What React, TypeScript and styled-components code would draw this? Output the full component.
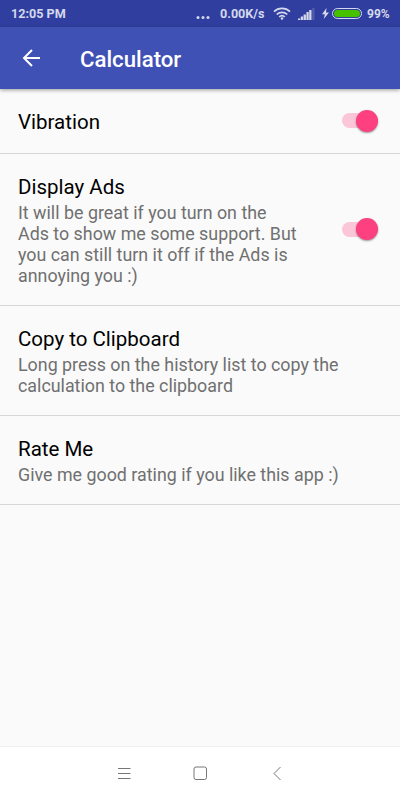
import { useState } from "react";
import styled, { createGlobalStyle } from "styled-components";

const GlobalStyle = createGlobalStyle`
  * {
    box-sizing: border-box;
  }
  body {
    margin: 0;
    font-family: Roboto, "Liberation Sans", sans-serif;
  }
`;

const Wrapper = styled.div`
  height: 100vh;
  display: flex;
  flex-direction: column;
  background: #fafafa;
  overflow: hidden;
`;

const StatusBar = styled.div`
  height: 27px;
  flex-shrink: 0;
  padding: 0 11px;
  display: flex;
  align-items: center;
  background: #303f9f;
  color: #d5d8ec;
  font-size: 12.6px;
  font-weight: 700;
  white-space: nowrap;
`;

const Clock = styled.span`
  flex: 1;
`;

const Dots = styled.svg`
  margin-right: 10px;
`;

const Speed = styled.span`
  width: 46px;
  margin-right: 7px;
`;

const WifiIcon = styled.svg`
  margin-right: 7px;
`;

const SignalIcon = styled.svg`
  margin-right: 7px;
`;

const BoltIcon = styled.svg`
  margin-right: 3px;
`;

const Battery = styled.div`
  width: 30px;
  height: 11px;
  margin-right: 5px;
  padding: 1px;
  border: 1px solid #d5d8ec;
  border-radius: 6px;
`;

const Charge = styled.div`
  width: 100%;
  height: 100%;
  border-radius: 4px;
  background: #45c100;
`;

const Percent = styled.span`
  width: 22px;
  font-size: 12px;
`;

const Toolbar = styled.header`
  height: 62px;
  flex-shrink: 0;
  padding: 0 20px;
  display: flex;
  align-items: center;
  background: #3f51b5;
  color: #fff;
  box-shadow: 0 1px 4px rgba(0, 0, 0, 0.4);
  z-index: 1;
`;

const BackButton = styled.button`
  width: 22px;
  height: 24px;
  margin-right: 38px;
  padding: 0;
  border: 0;
  background: none;
  color: inherit;
  svg {
    display: block;
  }
`;

const Heading = styled.h1`
  margin: 2px 0 0;
  font-size: 22.2px;
  font-weight: 500;
`;

const List = styled.main`
  flex: 1;
`;

const Row = styled.div<{ $compact?: boolean }>`
  display: flex;
  align-items: center;
  justify-content: space-between;
  padding: ${(props) => (props.$compact ? "17px 18px" : "19px 18px")};
  border-bottom: 1px solid #d6d6d6;
`;

const Title = styled.div<{ $compact?: boolean }>`
  padding-top: ${(props) => (props.$compact ? "3px" : "1px")};
  color: #000;
  font-size: 20.5px;
  line-height: 27px;
`;

const Summary = styled.div<{ $width?: number }>`
  width: ${(props) => (props.$width ? `${props.$width}px` : "auto")};
  margin-top: 1px;
  color: #707070;
  font-size: 17.85px;
  line-height: 21px;
`;

const Track = styled.button<{ $on: boolean }>`
  width: 36px;
  height: 15px;
  margin: 0 4px 1px 0;
  flex-shrink: 0;
  padding: 0;
  display: flex;
  align-items: center;
  justify-content: ${(props) => (props.$on ? "flex-end" : "flex-start")};
  border: 0;
  border-radius: 8px;
  background: ${(props) => (props.$on ? "#fbc6d7" : "#b9b9b9")};
`;

const Thumb = styled.span<{ $on: boolean }>`
  width: 22px;
  height: 22px;
  flex-shrink: 0;
  border-radius: 50%;
  background: ${(props) => (props.$on ? "#fc4080" : "#f1f1f1")};
  box-shadow: 0 1px 2px rgba(0, 0, 0, 0.4);
`;

const NavBar = styled.nav`
  height: 54px;
  flex-shrink: 0;
  padding-left: 2px;
  display: flex;
  align-items: center;
  justify-content: center;
  gap: 60px;
  border-top: 1px solid #f0f0f0;
  background: #fff;
  svg {
    fill: none;
    stroke: #777;
  }
`;

const Switch = ({ label }: { label: string }) => {
  const [on, setOn] = useState(true);

  return (
    <Track
      role="switch"
      aria-checked={on}
      aria-label={label}
      $on={on}
      onClick={() => setOn(!on)}
    >
      <Thumb $on={on} />
    </Track>
  );
};

const items = [
  { title: "Vibration", toggle: true },
  {
    title: "Display Ads",
    summary:
      "It will be great if you turn on the Ads to show me some support. But you can still turn it off if the Ads is annoying you :)",
    width: 282,
    toggle: true,
  },
  {
    title: "Copy to Clipboard",
    summary:
      "Long press on the history list to copy the calculation to the clipboard",
  },
  {
    title: "Rate Me",
    summary: "Give me good rating if you like this app :)",
  },
];

const App = () => {
  return (
    <>
      <GlobalStyle />
      <Wrapper>
        <StatusBar>
          <Clock>12:05 PM</Clock>
          <Dots width="14" height="12" fill="currentColor">
            <circle cx="2" cy="9.5" r="1.5" />
            <circle cx="7" cy="9.5" r="1.5" />
            <circle cx="12" cy="9.5" r="1.5" />
          </Dots>
          <Speed>0.00K/s</Speed>
          <WifiIcon
            width="18"
            height="14"
            fill="none"
            stroke="currentColor"
            strokeWidth="1.7"
          >
            <path d="M1 4.7a11.5 11.5 0 0 1 16 0M3.7 7.5a7.7 7.7 0 0 1 10.6 0M6.2 9.9a4.1 4.1 0 0 1 5.6 0" />
            <circle cx="9" cy="11.5" r="1.3" fill="currentColor" stroke="none" />
          </WifiIcon>
          <SignalIcon width="17" height="12" fill="currentColor">
            <path d="M0 10.5h2.3V12H0zM2.8 8.5h2.3V12H2.8zM5.6 6.5h2.3V12H5.6zM8.4 4h2.3v8H8.4zM11.2 2h2.3v10h-2.3z" />
            <path d="M14.2 0h2.3v12h-2.3z" opacity="0.2" />
          </SignalIcon>
          <BoltIcon width="7" height="11" fill="currentColor">
            <path d="M4.5 0 0 6.2h2.8L1.8 11 7 4.5H4z" />
          </BoltIcon>
          <Battery>
            <Charge />
          </Battery>
          <Percent>99%</Percent>
        </StatusBar>
        <Toolbar>
          <BackButton aria-label="Back">
            <svg
              width="22"
              height="24"
              fill="none"
              stroke="currentColor"
              strokeWidth="2"
            >
              <path d="M20 12H4M12 4l-8 8 8 8" />
            </svg>
          </BackButton>
          <Heading>Calculator</Heading>
        </Toolbar>
        <List>
          {items.map((item) => (
            <Row key={item.title} $compact={!item.summary}>
              <div>
                <Title $compact={!item.summary}>{item.title}</Title>
                {item.summary && (
                  <Summary $width={item.width}>{item.summary}</Summary>
                )}
              </div>
              {item.toggle && <Switch label={item.title} />}
            </Row>
          ))}
        </List>
        <NavBar>
          <svg width="16" height="16">
            <path d="M1 2.5h12.5M1 7.5h12.5M1 12.5h12.5" />
          </svg>
          <svg width="16" height="16">
            <rect x="1" y="1" width="12.5" height="12.5" rx="2" />
          </svg>
          <svg width="16" height="16">
            <path d="M11.5 1 5 7.5l6.5 6.5" />
          </svg>
        </NavBar>
      </Wrapper>
    </>
  );
};

export default App;
